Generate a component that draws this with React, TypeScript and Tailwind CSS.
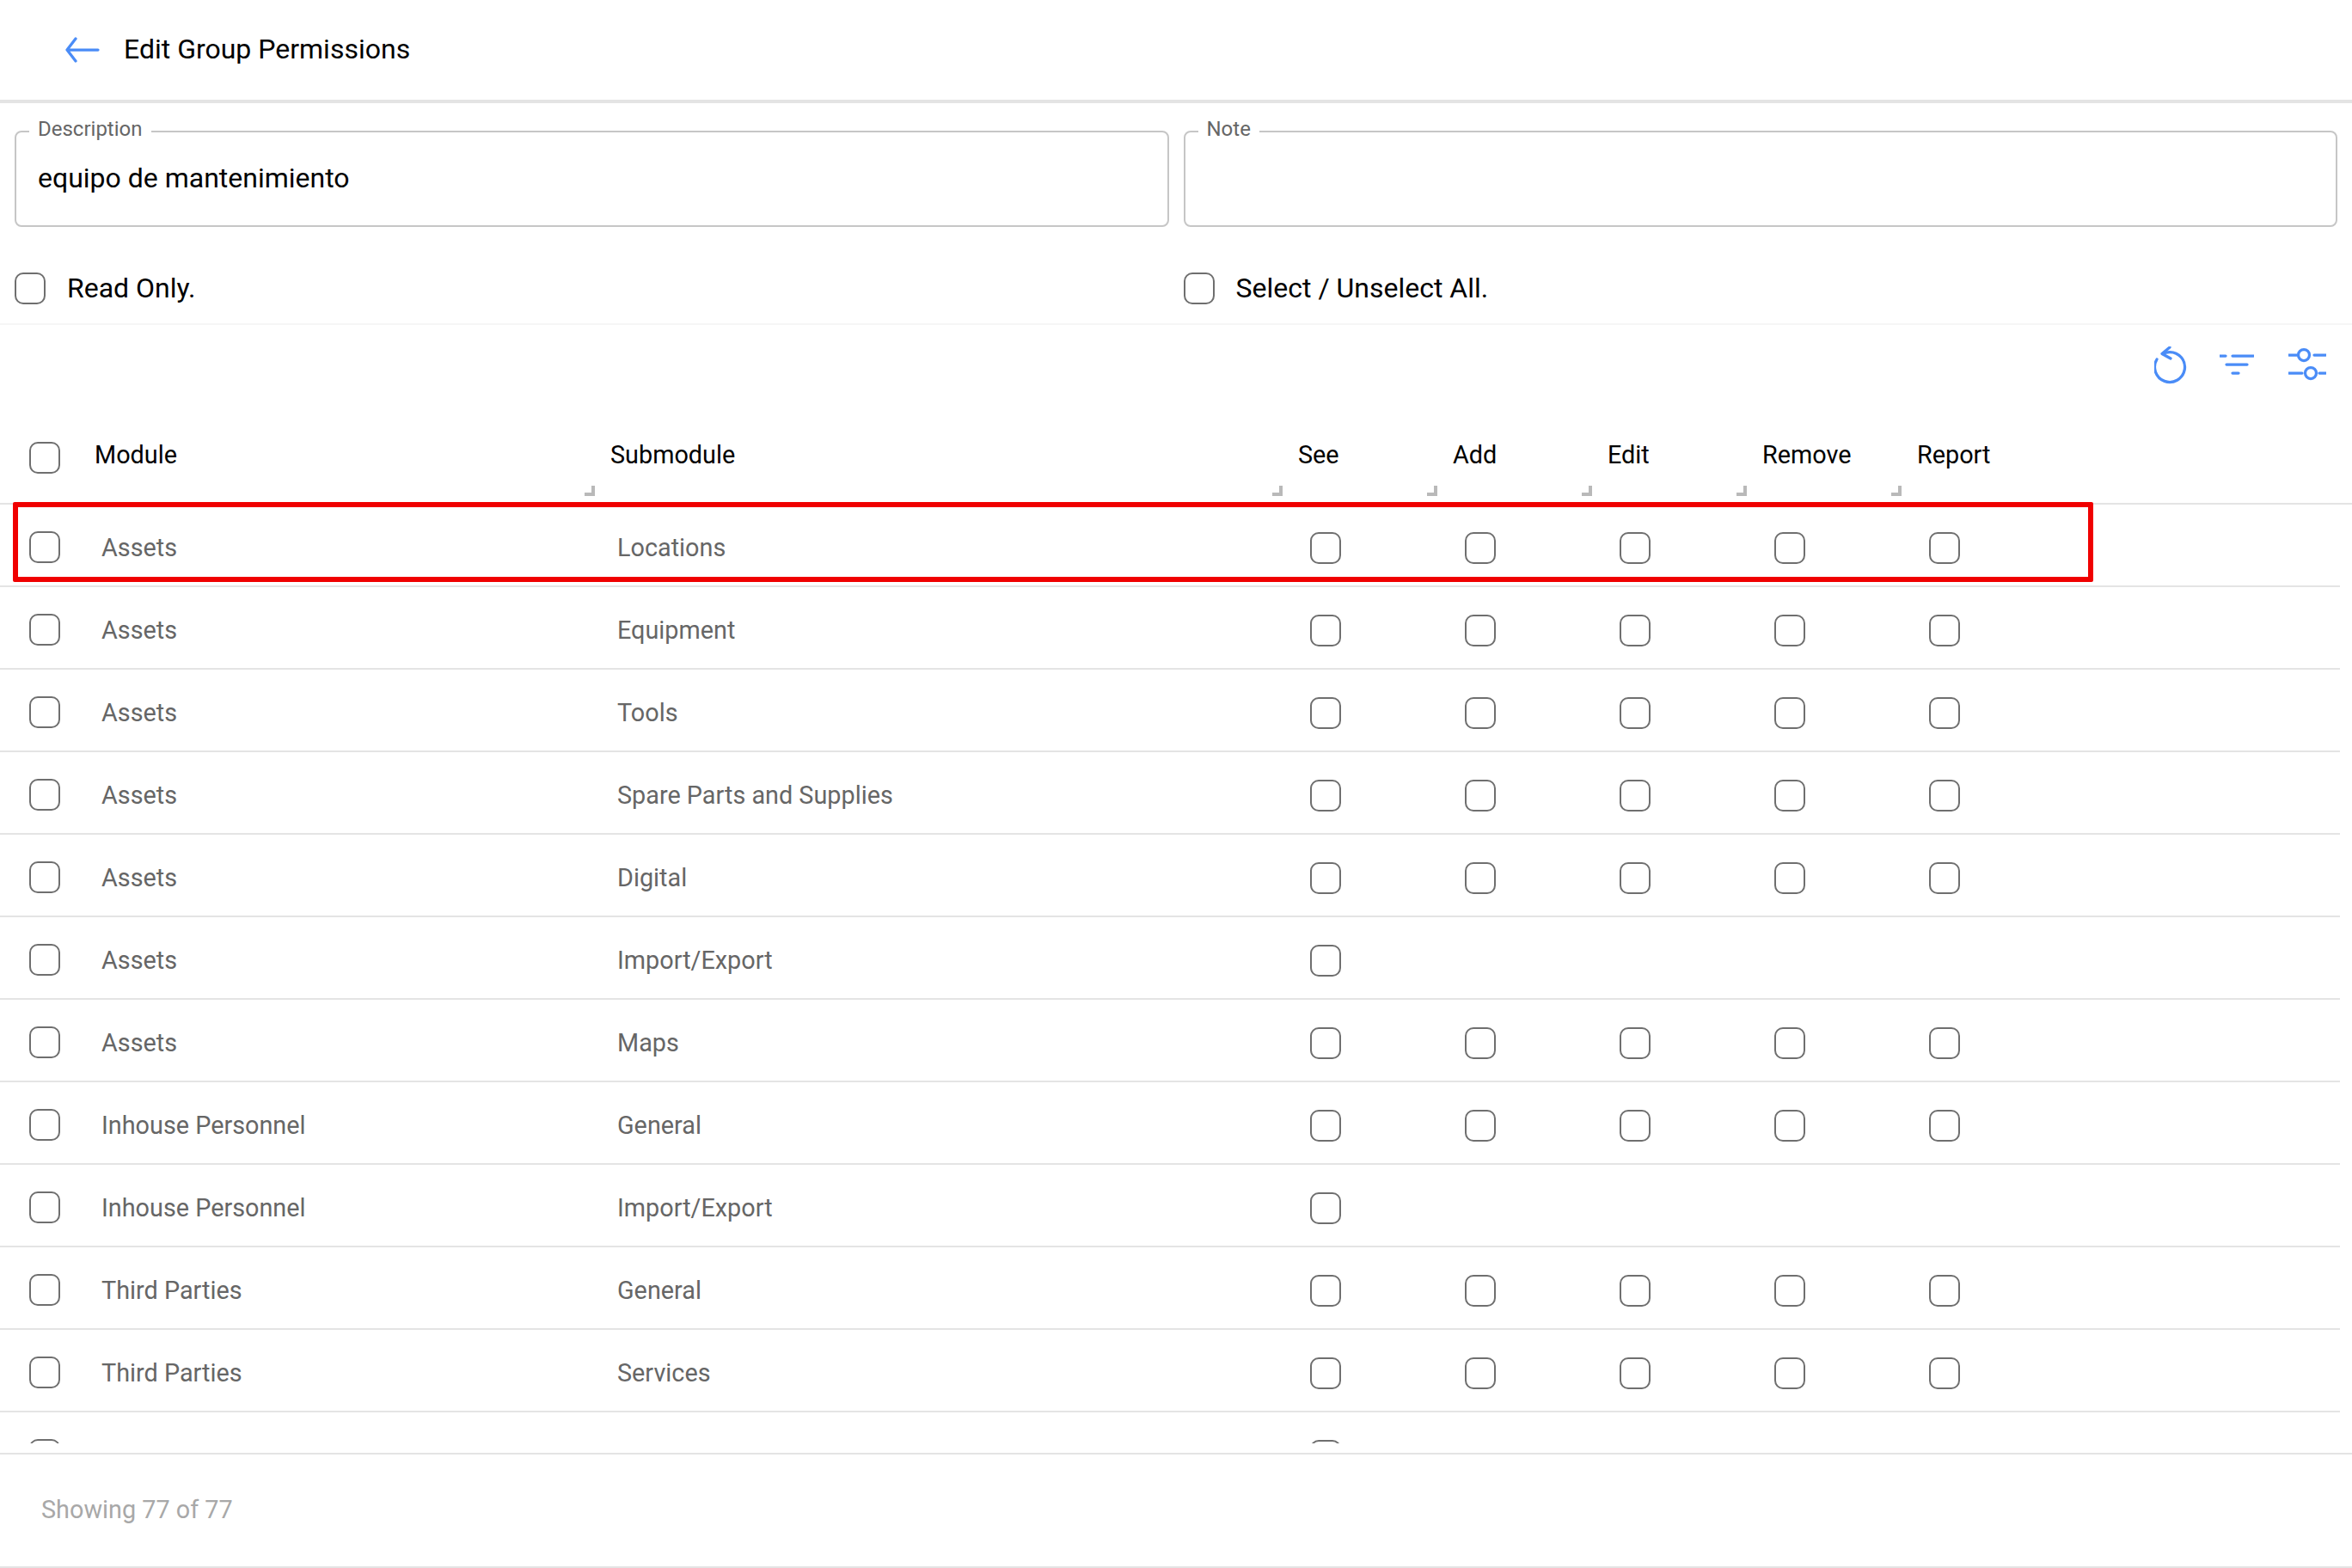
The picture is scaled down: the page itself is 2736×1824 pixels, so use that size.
import { ReactNode } from "react";

const rows: [string, string, boolean][] = [
  ["Assets", "Locations", false],
  ["Assets", "Equipment", false],
  ["Assets", "Tools", false],
  ["Assets", "Spare Parts and Supplies", false],
  ["Assets", "Digital", false],
  ["Assets", "Import/Export", true],
  ["Assets", "Maps", false],
  ["Inhouse Personnel", "General", false],
  ["Inhouse Personnel", "Import/Export", true],
  ["Third Parties", "General", false],
  ["Third Parties", "Services", false],
  ["", "", true],
];

const perms = ["See", "Add", "Edit", "Remove", "Report"];

function Check() {
  return <span className="block w-[36px] h-[37px] rounded-[10px] border-2 border-[#6f6f6f] bg-white shrink-0" />;
}

function Handle() {
  return <span className="absolute right-0 bottom-[8px] w-[12px] h-[12px] border-r-[4px] border-b-[4px] border-[#b9b9b9]" style={{ clipPath: "polygon(100% 0, 100% 100%, 0 100%, 0 50%, 50% 50%, 50% 0)" }} />;
}

function Field({ label, children }: { label: string; children?: ReactNode }) {
  return (
    <fieldset className="h-[128px] border-2 border-[#c6c6c6] rounded-[8px] px-[25px]">
      <legend className="ml-[-10px] px-[10px] pb-[6px] text-[24px] leading-[28px] text-[#666666]">{label}</legend>
      <div className="mt-[15px] h-[44px] text-[32px] leading-[44px] text-black">{children}</div>
    </fieldset>
  );
}

export default function App() {
  return (
    <div className="w-[2736px] h-[1824px] overflow-hidden bg-white flex flex-col font-['Roboto',sans-serif]">
      <header className="h-[120px] shrink-0 border-b-4 border-[#e4e4e4] flex items-center pl-[76px]">
        <svg width="40" height="30" viewBox="0 0 40 30" fill="none" stroke="#4a8cf7" strokeWidth="3.25" strokeLinecap="round" strokeLinejoin="round">
          <path d="M38 15H2M12 2 2 15l10 13" />
        </svg>
        <h1 className="ml-[28px] pb-[2px] text-[32px] font-normal text-black">Edit Group Permissions</h1>
      </header>

      <section className="shrink-0 px-[17px] pt-[16px]">
        <div className="grid grid-cols-2 gap-[17px]">
          <Field label="Description">equipo de mantenimiento</Field>
          <Field label="Note" />
        </div>
        <div className="grid grid-cols-2 gap-[17px] h-[112px] pt-[30px] items-center text-[32px] text-black">
          <label className="flex items-center gap-[25px]"><Check />Read Only.</label>
          <label className="flex items-center gap-[25px]"><Check />Select / Unselect All.</label>
        </div>
      </section>

      <div className="shrink-0 h-[122px] border-t-2 border-[#f6f6f6] flex justify-end items-start pt-[25px] pr-[30px] gap-[40px]">
        <svg width="38" height="44" viewBox="0 0 38 44" fill="none" stroke="#4a8cf7" strokeWidth="3.25" strokeLinecap="round" strokeLinejoin="round" className="mr-[-2px]">
          <path d="M3 15a17.5 17.5 0 1 0 15-8.5c-3 0-6 .7-8 2" />
          <path d="M18 1 9 8.5 19 14" />
        </svg>
        <svg width="40" height="26" viewBox="0 0 40 26" fill="none" stroke="#4a8cf7" strokeWidth="3.25" strokeLinecap="round" className="mt-[8px]">
          <path d="M1 3h6M15 3h24M8 13h24M15 23h7" />
        </svg>
        <svg width="44" height="40" viewBox="0 0 44 40" fill="none" stroke="#4a8cf7" strokeWidth="3.25" strokeLinecap="round" className="mt-[1px]">
          <path d="M1 9h9M30 9h13M1 30h15M36 30h7" />
          <circle cx="18" cy="9" r="6.5" />
          <circle cx="26" cy="30" r="6.5" />
        </svg>
      </div>

      {/* table head */}
      <div className="shrink-0 h-[89px] border-b-2 border-[#e4e4e4] flex text-[28.8px] text-black">
        <div className="w-[91px] pl-[34px] pt-[16px]"><Check /></div>
        <div className="relative w-[601px] pl-[19px] pt-[10px]">Module<Handle /></div>
        <div className="relative w-[800px] pl-[18px] pt-[10px]">Submodule<Handle /></div>
        {perms.map((p, j) => (
          <div key={p} className="relative w-[180px] pl-[18px] pt-[10px]">
            {p}
            {j < 4 && <Handle />}
          </div>
        ))}
      </div>

      {/* rows, the marked one gets a red frame on top */}
      <div className="relative shrink-0">
        <div className="h-[1092px] overflow-hidden">
          {rows.map(([mod, sub, seeOnly], i) => (
            <div key={i} className="h-[96px] w-[2722px] pt-[7px] border-b-2 border-[#e4e4e4] flex items-center text-[28.8px] text-[#666666]">
              <div className="w-[91px] pl-[34px] pb-[2px]"><Check /></div>
              <div className="w-[601px] pl-[27px]">{mod}</div>
              <div className="w-[800px] pl-[26px]">{sub}</div>
              {perms.map((p, j) => (
                <div key={p} className="w-[180px] pl-[32px]">{(!seeOnly || j === 0) && <Check />}</div>
              ))}
            </div>
          ))}
        </div>
        <div className="absolute left-[15px] top-[-3px] w-[2420px] h-[93px] border-[6px] border-[#f00000] rounded-[2px]" />
      </div>

      <div className="h-[11px] shrink-0" />
      <footer className="flex-1 border-t-2 border-b-2 border-[#e4e4e4] flex items-center pl-[48px] text-[28.8px] text-[#a8a8a8]">
        Showing 77 of 77
      </footer>
    </div>
  );
}
